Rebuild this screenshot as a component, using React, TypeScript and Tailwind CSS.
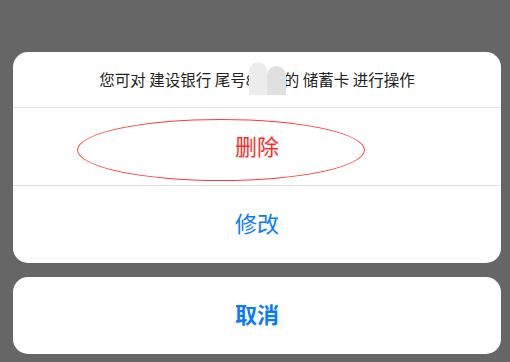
const FONT = { fontFamily: '"Noto Sans CJK SC", "Noto Sans", sans-serif' };

function MaskedDigits() {
  return (
    <span className="relative inline-block w-[38px] text-left">
      <span className="text-[#222]">8888</span>
      {/* privacy mask over the card number */}
      <span className="absolute bottom-[-4px] left-[3px] right-[-2px] top-[-6px] flex items-end">
        <span className="h-full flex-1 rounded-t-full rounded-bl-[3px] bg-[#ececec]" />
        <span className="h-[88%] flex-1 rounded-t-full rounded-br-[3px] bg-[#e0e0e0]" />
      </span>
    </span>
  );
}

export default function App() {
  return (
    <div
      className="h-[362px] w-full overflow-hidden bg-[#666666] pl-[13px] pr-[9px] pt-[52px]"
      style={FONT}
    >
      <div className="relative flex flex-col overflow-hidden rounded-[15px] bg-white">
        <div className="flex h-[56px] items-center justify-center border-b border-[#e2e2e2] text-[15.5px] text-[#222]">
          <span className="whitespace-pre">
            您可对 建设银行 尾号
            <MaskedDigits />
            的 储蓄卡 进行操作
          </span>
        </div>
        <button className="flex h-[78px] items-center justify-center border-b border-[#e2e2e2] pb-[2px] text-[22px] text-[#ff2a1f]">
          删除
        </button>
        <button className="flex h-[77px] items-center justify-center pb-[5px] text-[22px] text-[#0a7aff]">
          修改
        </button>
        {/* annotation ring around the delete action */}
        <div className="pointer-events-none absolute left-[64px] top-[67px] h-[62px] w-[288px] rounded-[50%] border border-[#ff3b3b]" />
      </div>
      <button className="mt-[14px] flex h-[77px] w-full items-center justify-center rounded-[15px] bg-white pb-[5px] text-[22px] font-bold text-[#0a7aff]">
        取消
      </button>
    </div>
  );
}
